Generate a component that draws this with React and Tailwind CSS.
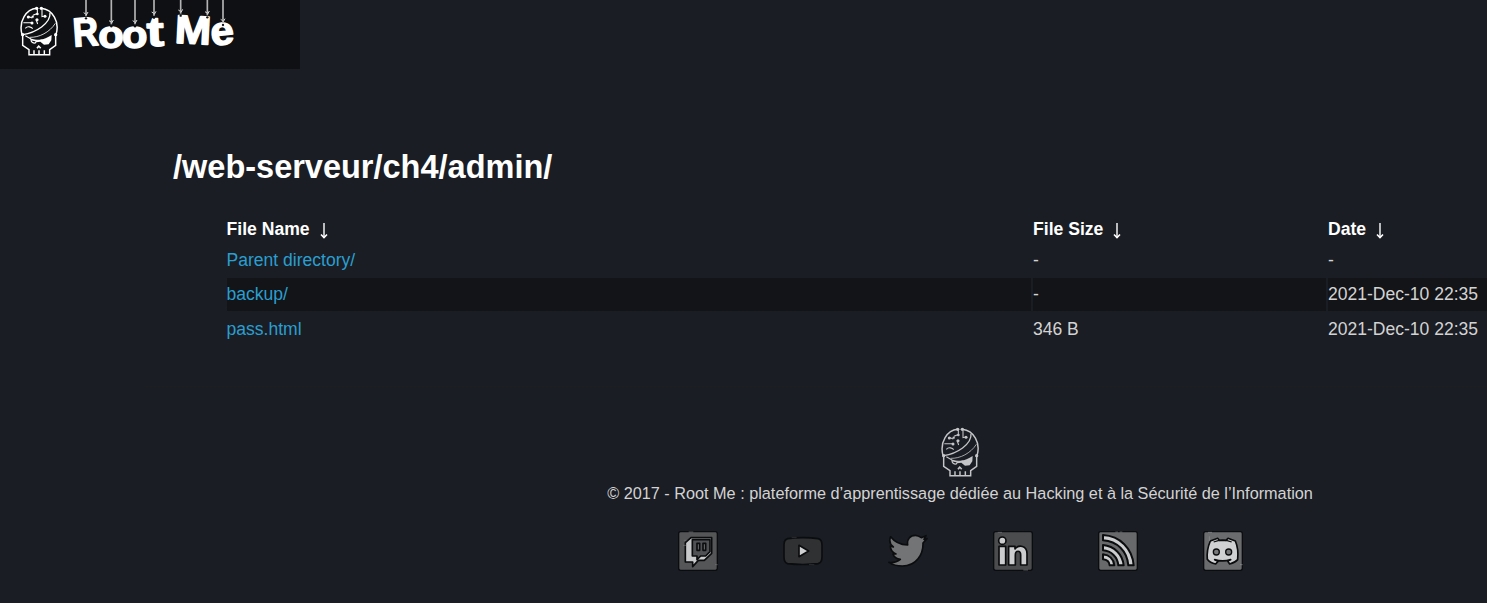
const columns = ["File Name", "File Size", "Date"];
const rows = [
  ["Parent directory/", "-", "-"],
  ["backup/", "-", "2021-Dec-10 22:35"],
  ["pass.html", "346 B", "2021-Dec-10 22:35"],
];

const letters = [
  { c: "R", x: 26, y: 140, size: 122, rot: -4, sx: 0.87 },
  { c: "o", x: 100, y: 143, size: 119, rot: 0, sx: 1.05 },
  { c: "o", x: 171, y: 143, size: 119, rot: 0, sx: 1.05 },
  { c: "t", x: 247, y: 139, size: 126, rot: -2, sx: 1.22 },
  { c: "M", x: 328, y: 128, size: 120, rot: 3, sx: 1.09 },
  { c: "e", x: 440, y: 137, size: 120, rot: -6, sx: 1.05 },
];

const strings = [
  [63, 54], [139, 78], [210, 78], [267, 52], [347, 46], [427, 51], [474, 74],
];

function Skull({ className }) {
  return (
    <svg viewBox="15 18 114 150" className={className} fill="none" stroke="currentColor" strokeWidth="4.4">
      <path d="M21 104C10 62 34 28 65 25M79 25C113 29 135 65 123 104" />
      <path d="M23 108V136L42 149V164H104V149L122 136V108" />
      <path d="M57 151V164M72 151V164M88 151V164" />
      <path d="M23 104C62 98 108 70 105 38" strokeWidth="4" />
      <path d="M44 112C72 113 104 97 121 70" strokeWidth="2.4" />
      <path d="M25 68H49M31 85C38 76 50 82 53 86M42 50L52 54M54 46L65 41M63 58L68 72M81 28V50L89 48M67 27V40" strokeWidth="3.2" />
      <g fill="currentColor" stroke="none">
        <circle cx="51" cy="69" r="4.5" /><circle cx="66" cy="59" r="4.5" />
        <circle cx="40" cy="51" r="4.5" /><circle cx="53" cy="50" r="3.5" />
        <circle cx="67" cy="42" r="4" /><circle cx="90" cy="49" r="4.5" />
        <circle cx="65" cy="25" r="5" /><circle cx="79" cy="25" r="5" />
        <circle cx="23" cy="104" r="5" /><circle cx="122" cy="104" r="5" />
        <path d="M69 121C87 119 98 112 110 105L109 121L101 133L87 134L76 125L63 127V122Z" />
        <path d="M71 135L64 143L68 146L72 142L75 146L79 143Z" />
      </g>
      <path d="M48 119L64 123L61 129C53 130 48 125 48 119Z" strokeWidth="3.6" />
      <path d="M31 107L48 117C58 122 72 121 83 119" strokeWidth="3.2" />
    </svg>
  );
}

function Wordmark() {
  return (
    <svg viewBox="0 0 540 207" className="h-[69px] w-[180px]" role="img" aria-label="Root Me">
      <g fill="white" stroke="white" strokeWidth="4.5" strokeLinejoin="round" fontFamily="Liberation Sans, sans-serif" fontWeight="700">
        {letters.map((l, i) => (
          <text key={i} fontSize={l.size} transform={`translate(${l.x} ${l.y}) rotate(${l.rot}) scale(${l.sx} 1)`}>{l.c}</text>
        ))}
      </g>
      {strings.map(([x, y]) => (
        <g key={x}>
          <path d={`M${x} 0V${y - 5}`} stroke="#b4b4b4" strokeWidth="5" />
          <path d={`M${x + 1} ${y - 9}L${x + 6} ${y - 18}M${x - 1} ${y - 12}L${x - 7} ${y - 16}`} stroke="#dedede" strokeWidth="3" fill="none" />
          <circle cx={x} cy={y + 1} r="3.5" fill="#0f1013" />
        </g>
      ))}
    </svg>
  );
}

function Tile({ fill }) {
  return <rect x="2" y="2" width="116" height="116" rx="6" fill={fill} stroke="#0b0c0e" strokeWidth="4" />;
}

function Icon({ children, label }) {
  return (
    <svg viewBox="0 0 120 120" className="size-10" role="img" aria-label={label} fill="none" strokeLinejoin="round">
      {children}
    </svg>
  );
}

function Socials() {
  return (
    <div className="mt-[27px] flex justify-center gap-[65px]">
      <Icon label="Twitch">
        <Tile fill="#555658" />
        <path d="M22 35L39 20H101V67L79 88H61L44 107V93H22Z" fill="#c9cacc" stroke="#0b0c0e" strokeWidth="5" />
        <path d="M43 26H96V62L83 75H68L57 86V75H43Z" fill="#505154" stroke="#0b0c0e" strokeWidth="5" />
        <path d="M57 37H65V58H57ZM75 37H83V58H75Z" fill="#737477" stroke="#0b0c0e" strokeWidth="5" />
        <path d="M17 28H25M15 43H24M111 101H119M32 3H46" stroke="#737477" strokeWidth="2" />
      </Icon>
      <Icon label="YouTube">
        <path d="M14 23Q60 17 106 23Q117 26 117 42V78Q117 95 105 98Q60 103 14 98Q3 95 3 78V42Q3 26 14 23Z" fill="#303133" stroke="#0b0c0e" strokeWidth="5" />
        <path d="M48 43L77 60L48 77Z" fill="#d0d1d3" stroke="#0b0c0e" strokeWidth="5" />
        <path d="M26 20H41M78 101H94" stroke="#3d3e41" strokeWidth="2" />
      </Icon>
      <Icon label="Twitter">
        <path d="M8 17C20 33 38 41 59 42C56 24 67 13 82 13C90 13 96 17 100 20L114 14L108 25L117 23L105 36C106 70 85 105 43 105C27 105 13 101 3 94C16 96 28 92 37 85C27 84 18 78 15 69H24C12 64 7 56 7 45L16 48C5 39 3 28 8 17Z" fill="#737476" stroke="#0b0c0e" strokeWidth="5" />
      </Icon>
      <Icon label="LinkedIn">
        <Tile fill="#4b4c4e" />
        <circle cx="28" cy="29" r="11" fill="#cccdcf" stroke="#0b0c0e" strokeWidth="5" />
        <path d="M18 46H38V102H18ZM47 46H66V54C77 40 102 43 102 68V102H83V72C83 57 67 57 67 72V102H47Z" fill="#cccdcf" stroke="#0b0c0e" strokeWidth="5" />
        <path d="M14 4H27M91 117H105" stroke="#77787b" strokeWidth="2" />
      </Icon>
      <Icon label="RSS">
        <Tile fill="#68696b" />
        <path d="M15 12C66 15 103 52 107 103H91C87 60 58 31 15 28ZM15 42C49 45 74 70 77 103H61C59 78 40 60 15 58ZM15 70C34 72 47 85 49 103H35C34 93 26 86 15 85Z" fill="#cccdcf" stroke="#0b0c0e" strokeWidth="6" />
        <path d="M52 3H60M65 3H73" stroke="#77787b" strokeWidth="2" />
      </Icon>
      <Icon label="Discord">
        <Tile fill="#6b6c6e" />
        <path d="M22 30L44 22L49 28H69L75 22L97 30C104 46 106 66 104 86C98 93 88 97 80 99L74 90L83 86C67 91 51 91 35 86L45 91L38 99C28 97 18 92 13 85C11 65 15 46 22 30Z" fill="#d0d1d3" stroke="#0b0c0e" strokeWidth="5" />
        <path d="M32 33Q59 22 86 33" stroke="#0b0c0e" strokeWidth="4" />
        <circle cx="40" cy="63" r="9" fill="#77787a" stroke="#0b0c0e" strokeWidth="4" />
        <circle cx="77" cy="63" r="9" fill="#77787a" stroke="#0b0c0e" strokeWidth="4" />
        <path d="M15 4H27M19 16V30M111 101H119" stroke="#929395" strokeWidth="2" />
      </Icon>
    </div>
  );
}

function Arrow() {
  return (
    <svg viewBox="0 0 8 17" className="ml-[10px] mt-[3px] h-[17px] w-2" fill="none" stroke="white" aria-hidden="true">
      <path d="M4 1V16" strokeWidth="1.4" />
      <path d="M1 12.5L4 15.5L7 12.5" strokeWidth="1.6" />
    </svg>
  );
}

export default function App() {
  return (
    <div className="flex h-[603px] w-full flex-col overflow-hidden bg-[#1a1d24] font-['Liberation_Sans',Arial,sans-serif] text-[#d3d3d3]">
      <header className="flex h-[69px] w-[300px] items-start bg-[#0f1013] pl-5 text-white">
        <Skull className="mt-[6px] h-[50px] w-[38px]" />
        <div className="ml-[7px]"><Wordmark /></div>
      </header>

      <main className="ml-[146px] h-[318px] border-b border-[#1c1e22] pl-[27px] pt-[78px]">
        <h1 className="h-[40px] whitespace-nowrap text-[32.5px] font-bold leading-[40px] text-white">/web-serveur/ch4/admin/</h1>
        <div className="ml-[54px] mt-[29px] flex flex-col gap-0.5">
          <div className="grid h-[25px] grid-cols-[804px_293px_159px] gap-x-0.5 pb-px text-[17.6px] font-bold text-white">
            {columns.map((c, j) => (
              <div key={c} className={`flex items-center whitespace-nowrap ${j === 0 ? "-indent-[0.5px]" : ""}`}>{c}<Arrow /></div>
            ))}
          </div>
          {rows.map((r, i) => (
            <div key={r[0]} className={`grid h-[33px] grid-cols-[804px_293px_159px] gap-x-0.5 whitespace-nowrap text-[17.55px] ${i === 0 ? "leading-[35px]" : "leading-[33px]"}`}>
              {r.map((cell, j) => (
                <div key={j} className={`${i === 1 ? "bg-[#131418]" : ""} ${j === 0 ? "-indent-[0.5px] text-[#2a9fd0]" : ""}`}>{cell}</div>
              ))}
            </div>
          ))}
        </div>
      </main>

      <footer className="ml-[433px] flex w-[1054px] flex-col items-center pt-[40px]">
        <Skull className="h-[50px] w-[38px] text-[#c4c5c7]" />
        <p className="mt-[6px] whitespace-nowrap text-[16.25px] leading-[21px]">© 2017 - Root Me : plateforme d’apprentissage dédiée au Hacking et à la Sécurité de l’Information</p>
        <Socials />
      </footer>
    </div>
  );
}
